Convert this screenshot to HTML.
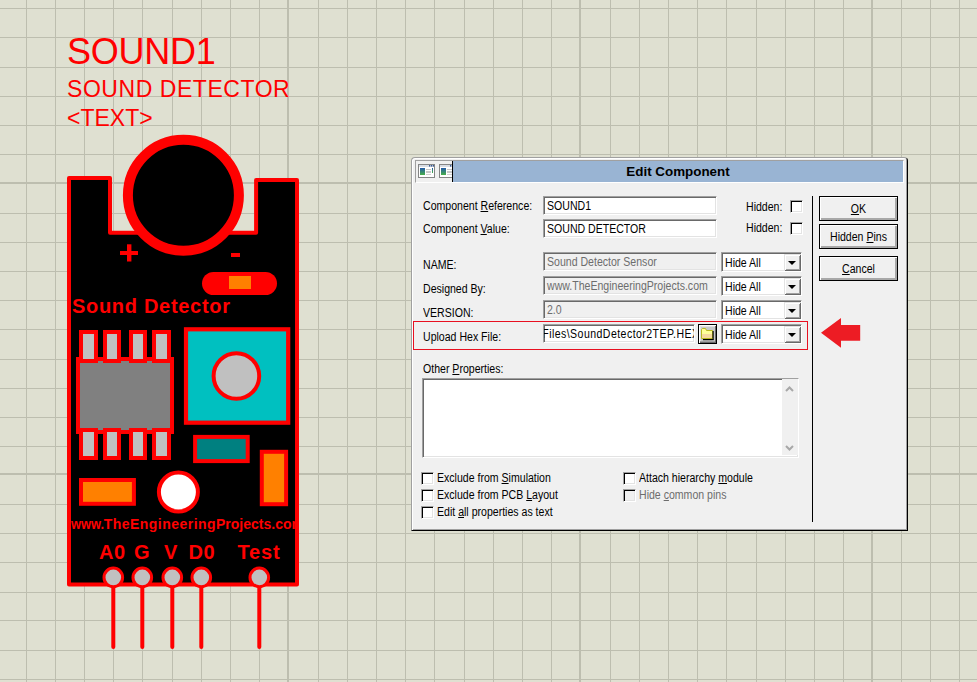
<!DOCTYPE html>
<html><head><meta charset="utf-8"><style>
*{margin:0;padding:0;box-sizing:border-box}
html,body{width:977px;height:682px;overflow:hidden;background:#dfe0d1;font-family:"Liberation Sans",sans-serif}
.rt{position:absolute;color:#ff0000;white-space:nowrap;line-height:1}
.b{font-weight:bold}
#dlg{position:absolute;left:411px;top:157px;width:497px;height:374px;border-top-left-radius:4px;border-top-right-radius:4px;background:#f0f0f0;border-top:1px solid #a0a0a0;border-left:1px solid #a0a0a0;border-right:1px solid #000;border-bottom:1px solid #000;box-shadow:inset 1px 1px 0 #fff, inset -1px -1px 0 #a0a0a0}
#tb{position:absolute;left:3px;top:2px;width:489px;height:23px;border-top:1px solid #a0a0a0;border-left:1px solid #a0a0a0;border-bottom:1px solid #fff;border-right:1px solid #fff}
#icons{position:absolute;left:0;top:0;width:37px;height:21px;background:#f0f0f0;border-right:1px solid #000}
.ic{position:absolute;top:3px;width:17px;height:14px;border:1px solid #808080;background:#fff}
#blue{position:absolute;left:37px;top:0;right:0;height:21px;background:#99b4d3;font-weight:bold;font-size:13.4px;text-align:center;line-height:21px;color:#000}

.lb{position:absolute;font-size:12px;line-height:14px;white-space:nowrap;transform:scaleX(0.88);transform-origin:0 0;color:#000}
.sk{position:absolute;border-top:1px solid #a0a0a0;border-left:1px solid #a0a0a0;border-bottom:1px solid #fff;border-right:1px solid #fff;box-shadow:inset 1px 1px 0 #696969, inset -1px -1px 0 #e3e3e3;overflow:hidden}
.sk .lb{}
.cb{position:absolute;width:13px;height:13px;background:#fff;border-top:1px solid #a0a0a0;border-left:1px solid #a0a0a0;border-bottom:1px solid #fff;border-right:1px solid #fff;box-shadow:inset 1px 1px 0 #000, inset -1px -1px 0 #e3e3e3}
.dd{position:absolute;right:0px;top:1px;width:17px;height:17px;background:#f0f0f0;box-shadow:inset 1px 1px 0 #e3e3e3, inset -1px -1px 0 #696969, inset 2px 2px 0 #fff, inset -2px -2px 0 #a0a0a0}
.tri{position:absolute;left:4px;top:7px;width:0;height:0;border-left:4px solid transparent;border-right:4px solid transparent;border-top:4px solid #000}
.bt{position:absolute;width:79px;height:25px;background:#f0f0f0;border:1px solid #000;box-shadow:inset 1px 1px 0 #fff, inset -1px -1px 0 #a8a8a8, inset -2px -2px 0 #a8a8a8}
.bl{position:absolute;left:0;width:100%;top:5px;text-align:center;font-size:12px;line-height:14px;transform:scaleX(0.88);white-space:nowrap}
.fb{position:absolute;left:698px;top:324px;width:19px;height:20px;background:#f0f0f0;border:1px solid #000;box-shadow:inset 1px 1px 0 #fff, inset -1px -1px 0 #696969, inset -2px -2px 0 #a0a0a0}
.sb{position:absolute;right:0;top:0;width:16px;height:76px;background:#f0f0f0}
</style></head><body>

<svg width="977" height="682" style="position:absolute;left:0;top:0">
<rect x="26" y="0" width="1" height="682" fill="#bdbeaf"/><rect x="55" y="0" width="1" height="682" fill="#bdbeaf"/><rect x="84" y="0" width="1" height="682" fill="#bdbeaf"/><rect x="113" y="0" width="1" height="682" fill="#bdbeaf"/><rect x="142" y="0" width="1" height="682" fill="#bdbeaf"/><rect x="172" y="0" width="1" height="682" fill="#bdbeaf"/><rect x="201" y="0" width="1" height="682" fill="#bdbeaf"/><rect x="230" y="0" width="1" height="682" fill="#bdbeaf"/><rect x="259" y="0" width="1" height="682" fill="#bdbeaf"/><rect x="287" y="0" width="2" height="682" fill="#bdbeaf"/><rect x="318" y="0" width="1" height="682" fill="#bdbeaf"/><rect x="347" y="0" width="1" height="682" fill="#bdbeaf"/><rect x="376" y="0" width="1" height="682" fill="#bdbeaf"/><rect x="405" y="0" width="1" height="682" fill="#bdbeaf"/><rect x="434" y="0" width="1" height="682" fill="#bdbeaf"/><rect x="464" y="0" width="1" height="682" fill="#bdbeaf"/><rect x="493" y="0" width="1" height="682" fill="#bdbeaf"/><rect x="522" y="0" width="1" height="682" fill="#bdbeaf"/><rect x="551" y="0" width="1" height="682" fill="#bdbeaf"/><rect x="579" y="0" width="2" height="682" fill="#bdbeaf"/><rect x="610" y="0" width="1" height="682" fill="#bdbeaf"/><rect x="639" y="0" width="1" height="682" fill="#bdbeaf"/><rect x="668" y="0" width="1" height="682" fill="#bdbeaf"/><rect x="697" y="0" width="1" height="682" fill="#bdbeaf"/><rect x="726" y="0" width="1" height="682" fill="#bdbeaf"/><rect x="756" y="0" width="1" height="682" fill="#bdbeaf"/><rect x="785" y="0" width="1" height="682" fill="#bdbeaf"/><rect x="814" y="0" width="1" height="682" fill="#bdbeaf"/><rect x="843" y="0" width="1" height="682" fill="#bdbeaf"/><rect x="871" y="0" width="2" height="682" fill="#bdbeaf"/><rect x="901" y="0" width="1" height="682" fill="#bdbeaf"/><rect x="930" y="0" width="1" height="682" fill="#bdbeaf"/><rect x="959" y="0" width="1" height="682" fill="#bdbeaf"/><rect x="0" y="8" width="977" height="1" fill="#bdbeaf"/><rect x="0" y="37" width="977" height="1" fill="#bdbeaf"/><rect x="0" y="67" width="977" height="1" fill="#bdbeaf"/><rect x="0" y="96" width="977" height="1" fill="#bdbeaf"/><rect x="0" y="125" width="977" height="1" fill="#bdbeaf"/><rect x="0" y="154" width="977" height="1" fill="#bdbeaf"/><rect x="0" y="182" width="977" height="2" fill="#bdbeaf"/><rect x="0" y="213" width="977" height="1" fill="#bdbeaf"/><rect x="0" y="242" width="977" height="1" fill="#bdbeaf"/><rect x="0" y="271" width="977" height="1" fill="#bdbeaf"/><rect x="0" y="300" width="977" height="1" fill="#bdbeaf"/><rect x="0" y="329" width="977" height="1" fill="#bdbeaf"/><rect x="0" y="359" width="977" height="1" fill="#bdbeaf"/><rect x="0" y="388" width="977" height="1" fill="#bdbeaf"/><rect x="0" y="417" width="977" height="1" fill="#bdbeaf"/><rect x="0" y="446" width="977" height="1" fill="#bdbeaf"/><rect x="0" y="473" width="977" height="2" fill="#bdbeaf"/><rect x="0" y="504" width="977" height="1" fill="#bdbeaf"/><rect x="0" y="533" width="977" height="1" fill="#bdbeaf"/><rect x="0" y="562" width="977" height="1" fill="#bdbeaf"/><rect x="0" y="592" width="977" height="1" fill="#bdbeaf"/><rect x="0" y="620" width="977" height="1" fill="#bdbeaf"/><rect x="0" y="650" width="977" height="1" fill="#bdbeaf"/><rect x="0" y="679" width="977" height="1" fill="#bdbeaf"/>
<!-- pin legs -->
<g stroke="#ff0000" stroke-width="4" stroke-linecap="round">
<line x1="113.3" y1="580" x2="113.3" y2="647"/>
<line x1="142.3" y1="580" x2="142.3" y2="647"/>
<line x1="172.3" y1="580" x2="172.3" y2="647"/>
<line x1="201.3" y1="580" x2="201.3" y2="647"/>
<line x1="259.3" y1="580" x2="259.3" y2="647"/>
</g>
<path d="M69,178 H110 V232.8 H256.1 V180.1 H297 V584.6 H69 Z" fill="#000" stroke="#ff0000" stroke-width="4" stroke-linejoin="round"/>
<circle cx="183.4" cy="195.3" r="55.5" fill="#000" stroke="#ff0000" stroke-width="10"/>
<rect x="120" y="251" width="18" height="4" fill="#ff0000"/>
<rect x="127" y="244.3" width="4.4" height="17.2" fill="#ff0000"/>
<rect x="231" y="253" width="9" height="4" fill="#ff0000"/>
<rect x="202" y="272" width="75" height="23" rx="11.5" fill="#ff0000"/>
<rect x="229" y="276" width="22" height="13" fill="#ff8000"/>
<!-- IC -->
<rect x="78" y="359" width="94" height="73" fill="#808080" stroke="#ff0000" stroke-width="4"/>
<g fill="#c0c0c0" stroke="#ff0000" stroke-width="4">
<rect x="81" y="332" width="15" height="29"/>
<rect x="105" y="332" width="14" height="29"/>
<rect x="131" y="332" width="14" height="29"/>
<rect x="154" y="332" width="15" height="29"/>
<rect x="81" y="430" width="15" height="28"/>
<rect x="105" y="430" width="14" height="28"/>
<rect x="131" y="430" width="14" height="28"/>
<rect x="154" y="430" width="15" height="28"/>
</g>
<!-- cyan pot -->
<rect x="186" y="329.3" width="102.2" height="93.4" fill="#00c0c0" stroke="#ff0000" stroke-width="4.2"/>
<circle cx="236.4" cy="376" r="22.8" fill="#c0c0c0" stroke="#ff0000" stroke-width="4"/>
<rect x="195.1" y="436.9" width="52.6" height="24.2" fill="#008080" stroke="#ff0000" stroke-width="4"/>
<rect x="261.8" y="451.8" width="24.3" height="52.4" fill="#ff8000" stroke="#ff0000" stroke-width="4"/>
<rect x="81" y="480" width="52.9" height="23.8" fill="#ff8000" stroke="#ff0000" stroke-width="4"/>
<circle cx="178.4" cy="492" r="19.5" fill="#fff" stroke="#ff0000" stroke-width="4"/>
<!-- header pins -->
<g fill="#c0c0c0" stroke="#ff0000" stroke-width="3">
<circle cx="113.3" cy="577.4" r="9.3"/>
<circle cx="142.3" cy="577.4" r="9.3"/>
<circle cx="172.3" cy="577.4" r="9.3"/>
<circle cx="201.3" cy="577.4" r="9.3"/>
<circle cx="259.3" cy="577.4" r="9.3"/>
</g>
</svg>


<div class="rt" style="left:67px;top:34px;font-size:36px;letter-spacing:-0.25px">SOUND1</div>
<div class="rt" style="left:67px;top:78px;font-size:23px;letter-spacing:0.55px">SOUND DETECTOR</div>
<div class="rt" style="left:67px;top:107px;font-size:23px">&lt;TEXT&gt;</div>
<div class="rt b" style="left:72px;top:296px;font-size:20px;letter-spacing:0.7px">Sound Detector</div>
<div style="position:absolute;left:71px;top:510px;width:224px;height:25px;overflow:hidden"><div class="rt b" style="left:0px;top:7px;font-size:14px;transform:scaleX(0.915);transform-origin:0 0">www.</div><div class="rt b" style="left:32.7px;top:7px;font-size:14px;letter-spacing:0.47px">TheEngineering</div><div class="rt b" style="left:145px;top:7px;font-size:14px">Projects.com</div></div>
<div class="rt b" style="left:99px;top:542px;font-size:20px;letter-spacing:0.5px">A0</div>
<div class="rt b" style="left:134px;top:542px;font-size:20px">G</div>
<div class="rt b" style="left:164px;top:542px;font-size:20px">V</div>
<div class="rt b" style="left:188.5px;top:542px;font-size:20px;letter-spacing:0.5px">D0</div>
<div class="rt b" style="left:237.5px;top:542px;font-size:20px;letter-spacing:0.8px">Test</div>


<div id="dlg">
 <div id="tb"><div id="icons"><svg width="36" height="21" style="position:absolute;left:0;top:0"><defs><linearGradient id="gg" x1="0" y1="0" x2="0" y2="1"><stop offset="0" stop-color="#2358a8"/><stop offset="1" stop-color="#48b048"/></linearGradient></defs><g transform="translate(2,3)"><g><rect x="0.5" y="0.5" width="16" height="13" fill="#fff" stroke="#858585"/><rect x="1" y="1" width="15" height="2" fill="#d8dce4"/><rect x="11" y="1" width="1.3" height="1.6" fill="#3a5a90"/><rect x="13" y="1" width="1.3" height="1.6" fill="#3a5a90"/><rect x="15" y="1" width="1" height="1.6" fill="#3a5a90"/><rect x="2" y="4" width="5" height="7" fill="url(#gg)"/><rect x="8" y="5" width="5" height="1" fill="#c8c8c8"/><rect x="8" y="7" width="5" height="2" fill="#c8c8c8"/><rect x="8" y="10" width="5" height="1" fill="#d0d0d0"/><rect x="14" y="4" width="1" height="5" fill="url(#gg)"/></g></g><g transform="translate(23,3)"><g><rect x="0.5" y="0.5" width="16" height="13" fill="#fff" stroke="#858585"/><rect x="1" y="1" width="15" height="2" fill="#d8dce4"/><rect x="11" y="1" width="1.3" height="1.6" fill="#3a5a90"/><rect x="13" y="1" width="1.3" height="1.6" fill="#3a5a90"/><rect x="15" y="1" width="1" height="1.6" fill="#3a5a90"/><rect x="2" y="4" width="5" height="7" fill="url(#gg)"/><rect x="8" y="5" width="5" height="1" fill="#c8c8c8"/><rect x="8" y="7" width="5" height="2" fill="#c8c8c8"/><rect x="8" y="10" width="5" height="1" fill="#d0d0d0"/><rect x="14" y="4" width="1" height="5" fill="url(#gg)"/></g></g></svg></div><div id="blue">Edit Component</div></div>
</div>

<div class="lb" style="left:423px;top:199px;color:#000;">Component <u>R</u>eference:</div>
<div class="lb" style="left:423px;top:222px;color:#000;">Component <u>V</u>alue:</div>
<div class="lb" style="left:423px;top:258px;color:#000;">NAME:</div>
<div class="lb" style="left:423px;top:282px;color:#000;">Designed By:</div>
<div class="lb" style="left:423px;top:306px;color:#000;">VERSION:</div>
<div class="lb" style="left:423px;top:330px;color:#000;">Upload Hex File:</div>
<div class="lb" style="left:423px;top:362px;color:#000;">Other <u>P</u>roperties:</div>
<div class="sk" style="left:543px;top:196px;width:174px;height:19px;background:#fff"><div class="lb" style="left:3px;top:2px;color:#000">SOUND1</div></div>
<div class="sk" style="left:543px;top:219px;width:174px;height:19px;background:#fff"><div class="lb" style="left:3px;top:2px;color:#000">SOUND DETECTOR</div></div>
<div class="sk" style="left:543px;top:252px;width:174px;height:19px;background:#f0f0f0"><div class="lb" style="left:3px;top:2px;color:#6d6d6d">Sound Detector Sensor</div></div>
<div class="sk" style="left:543px;top:276px;width:174px;height:19px;background:#f0f0f0"><div class="lb" style="left:3px;top:2px;color:#6d6d6d">www.TheEngineeringProjects.com</div></div>
<div class="sk" style="left:543px;top:300px;width:174px;height:19px;background:#f0f0f0"><div class="lb" style="left:3px;top:2px;color:#6d6d6d">2.0</div></div>
<div class="sk" style="left:543px;top:324px;width:152px;height:19px;background:#fff"><div class="lb" style="left:0px;top:2px;color:#000"><span style="position:relative;left:-2px;letter-spacing:0.5px">Files\SoundDetector2TEP.HEX</span></div></div>
<div class="lb" style="left:746px;top:200px;color:#000;">Hidden:</div>
<div class="lb" style="left:746px;top:221px;color:#000;">Hidden:</div>
<div class="cb" style="left:790px;top:200px"></div>
<div class="cb" style="left:790px;top:222px"></div>
<div class="sk" style="left:721px;top:252px;width:81px;height:20px;background:#fff"><div class="lb" style="left:3px;top:3px">Hide All</div><div class="dd"><div class="tri"></div></div></div>
<div class="sk" style="left:721px;top:276px;width:81px;height:20px;background:#fff"><div class="lb" style="left:3px;top:3px">Hide All</div><div class="dd"><div class="tri"></div></div></div>
<div class="sk" style="left:721px;top:300px;width:81px;height:20px;background:#fff"><div class="lb" style="left:3px;top:3px">Hide All</div><div class="dd"><div class="tri"></div></div></div>
<div class="sk" style="left:721px;top:324px;width:81px;height:20px;background:#fff"><div class="lb" style="left:3px;top:3px">Hide All</div><div class="dd"><div class="tri"></div></div></div>
<div class="fb"><svg width="17" height="18" style="position:absolute;left:0;top:0"><rect x="1" y="1" width="15" height="15" fill="#c8c8c8"/><rect x="1" y="1" width="15" height="1" fill="#e0e0e0"/><rect x="1" y="1" width="1" height="15" fill="#e0e0e0"/><path d="M2.5,4.5 v9 h11 v-8 h-6 l-1,-2 h-3 z" fill="#ffff98" stroke="#b8b820" stroke-width="1"/><rect x="3" y="9" width="10" height="4" fill="#f4d0a0" opacity="0.8"/><rect x="13.5" y="6" width="1.2" height="8.5" fill="#000"/><rect x="4" y="14" width="10.7" height="1.2" fill="#000"/></svg></div>
<div style="position:absolute;left:413px;top:321px;width:395px;height:29px;border:1px solid #e81020"></div>
<div class="sk" style="left:422px;top:378px;width:377px;height:80px;background:#fff"><div class="sb"><svg width="16" height="76" style="position:absolute;left:0;top:0"><path d="M4,12 L7.5,8.5 L11,12" fill="none" stroke="#a8a8a8" stroke-width="2"/><path d="M4,67 L7.5,70.5 L11,67" fill="none" stroke="#a8a8a8" stroke-width="2"/></svg></div></div>
<div class="cb" style="left:421px;top:472px"></div>
<div class="lb" style="left:437px;top:471px;color:#000;">Exclude from <u>S</u>imulation</div>
<div class="cb" style="left:421px;top:489px"></div>
<div class="lb" style="left:437px;top:488px;color:#000;">Exclude from PCB <u>L</u>ayout</div>
<div class="cb" style="left:421px;top:506px"></div>
<div class="lb" style="left:437px;top:505px;color:#000;">Edit <u>a</u>ll properties as text</div>
<div class="cb" style="left:623px;top:472px"></div>
<div class="lb" style="left:639px;top:471px;color:#000;">Attach hierarchy <u>m</u>odule</div>
<div class="cb" style="background:#f0f0f0;left:623px;top:489px"></div>
<div class="lb" style="left:639px;top:488px;color:#6d6d6d;">Hide <u>c</u>ommon pins</div>
<div style="position:absolute;left:812px;top:196px;width:1px;height:326px;background:#000"></div>
<div class="bt" style="left:819px;top:196px"><div class="bl"><u>O</u>K</div></div>
<div class="bt" style="left:819px;top:224px"><div class="bl">Hidden <u>P</u>ins</div></div>
<div class="bt" style="left:819px;top:256px"><div class="bl"><u>C</u>ancel</div></div>
<svg width="977" height="682" style="position:absolute;left:0;top:0"><polygon points="821,332.7 841,318 841,325 860.2,325 860.2,340.8 841,340.8 841,347.7" fill="#ed1c24"/></svg>
</body></html>
